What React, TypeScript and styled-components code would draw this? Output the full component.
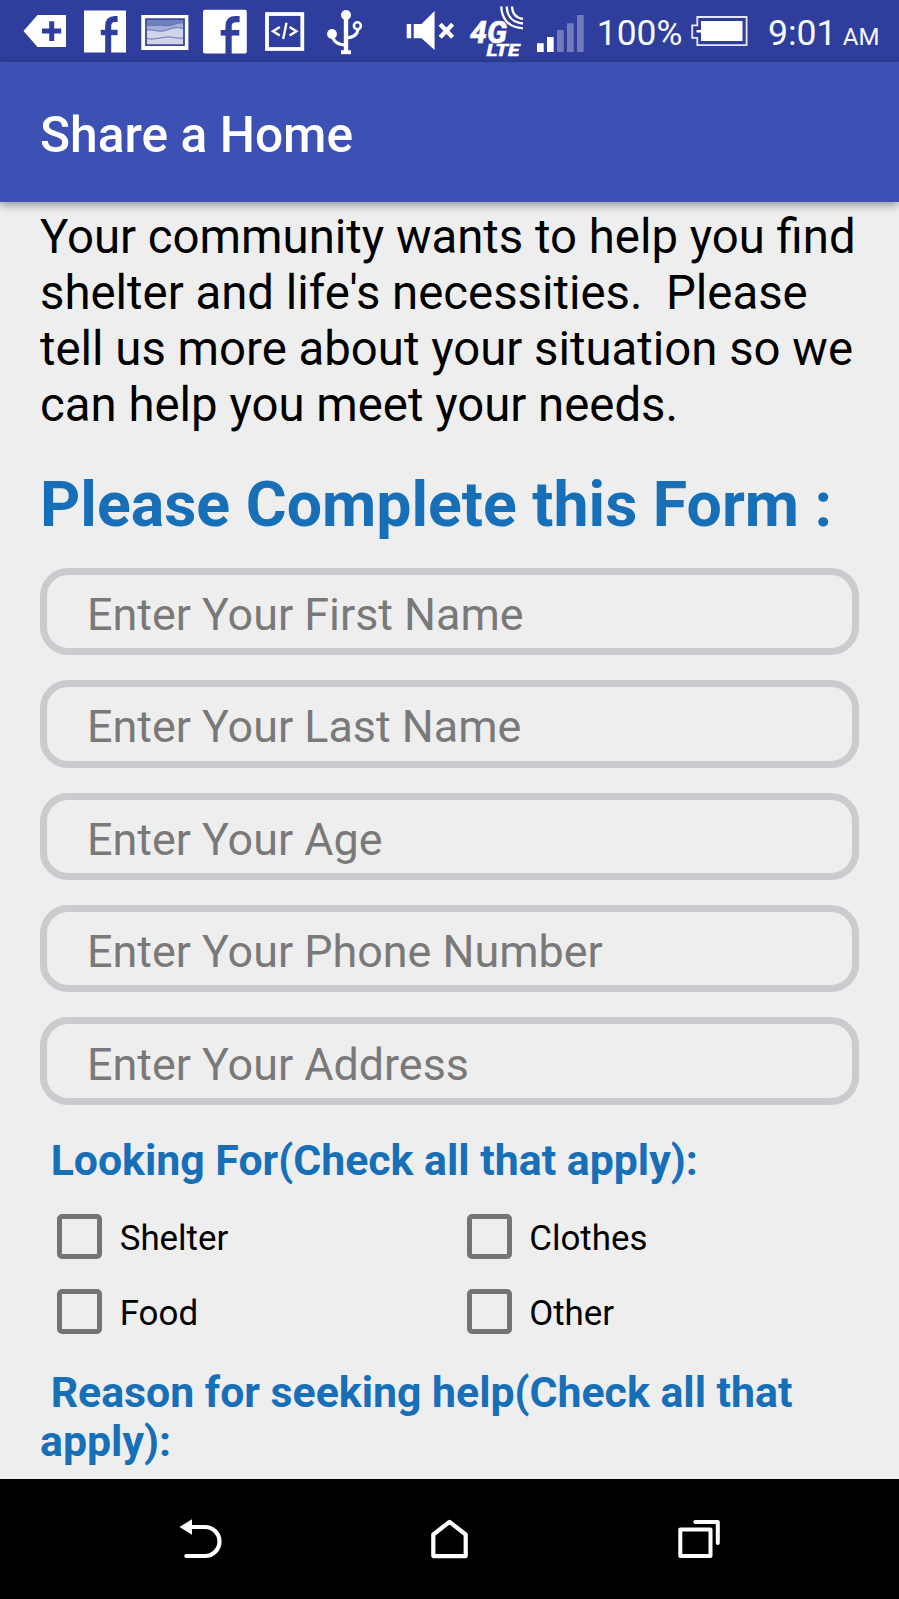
import React from "react";
import styled, { createGlobalStyle } from "styled-components";

const GlobalStyle = createGlobalStyle`
  * { box-sizing: border-box; }
  body {
    margin: 0;
    background: #eeeeee;
    font-family: Roboto, "Liberation Sans", sans-serif;
  }
`;

const Screen = styled.div`
  width: 899px;
  height: 1599px;
  display: flex;
  flex-direction: column;
  overflow: hidden;
  background: #eeeeee;
`;

const StatusBar = styled.header`
  flex: none;
  display: flex;
  height: 62px;
  background: #2f3e9c;
  color: #f7f9ff;
`;

const StatusIcon = styled.svg<{ $gap: number }>`
  flex: none;
  display: block;
  height: 62px;
  margin-left: ${(p) => p.$gap}px;
`;

const StatusText = styled.span<{ $gap: number; $size: number; $width: number }>`
  flex: none;
  width: ${(p) => p.$width}px;
  margin-left: ${(p) => p.$gap}px;
  font-size: ${(p) => p.$size}px;
  line-height: 66px;
  white-space: nowrap;
`;

const Meridiem = styled(StatusText)`
  line-height: 74px;
`;

const AppBar = styled.div`
  flex: none;
  display: flex;
  align-items: center;
  height: 140px;
  padding: 5px 40px 0;
  background: #3d51b4;
  box-shadow: 0 3px 9px rgba(0, 0, 0, 0.38);
`;

const Title = styled.h1`
  margin: 0;
  color: #ffffff;
  font-size: 49.7px;
  font-weight: 500;
  line-height: 58px;
`;

const Content = styled.main`
  flex: 1;
  min-height: 0;
  overflow: hidden;
  padding: 7px 40px 0;
`;

const Body = styled.div`
  flex: 1;
  min-height: 0;
  display: flex;
  flex-direction: column;
`;

const Intro = styled.p`
  margin: 0 -5px 0 0;
  color: #000000;
  font-size: 47.34px;
  line-height: 56px;
`;

const FormHeading = styled.h2`
  margin: 35px 0 0;
  color: #176fb8;
  font-size: 62.6px;
  font-weight: 700;
  line-height: 73px;
  white-space: nowrap;
`;

const FieldList = styled.div`
  display: flex;
  flex-direction: column;
  gap: 25px;
  margin-top: 26.9px;
`;

const Field = styled.label`
  display: flex;
  align-items: center;
  width: 819px;
  height: 87.4px;
  padding: 6px 20px 0 40px;
  border: 7px solid #c9cbcf;
  border-radius: 28px;
  color: #797979;
  font-size: 44.87px;
  line-height: 53px;
`;

const GroupHeading = styled.h3<{ $top: number }>`
  margin: ${(p) => p.$top}px 0 0;
  color: #176fb8;
  font-size: 42.8px;
  font-weight: 700;
  line-height: 49px;
  white-space: pre-wrap;
`;

const OptionGrid = styled.div`
  display: grid;
  grid-template-columns: 409.5px 409.5px;
  grid-auto-rows: 75px;
  margin-top: 14px;
`;

const Option = styled.label`
  display: flex;
  align-items: center;
  gap: 17.4px;
  padding-left: 17.3px;
  color: #000000;
  font-size: 34.9px;
  line-height: 41px;
`;

const CheckBox = styled.span`
  flex: none;
  width: 45px;
  height: 45px;
  border: 5px solid #747474;
  border-radius: 5px;
`;

const OptionLabel = styled.span`
  padding-top: 4px;
`;

const NavBar = styled.nav`
  flex: none;
  display: flex;
  justify-content: center;
  height: 120px;
  background: #000000;
`;

const NavButton = styled.button`
  display: flex;
  justify-content: center;
  width: 249.7px;
  padding: 0;
  border: 0;
  background: none;
`;

const fields = [
  "Enter Your First Name",
  "Enter Your Last Name",
  "Enter Your Age",
  "Enter Your Phone Number",
  "Enter Your Address",
];

const needs = ["Shelter", "Clothes", "Food", "Other"];

function StatusIcons() {
  return (
    <>
      <StatusIcon $gap={23} width="44" viewBox="23 0 44 62">
        <path d="M23.5 31 37.5 15H66V47H37.5Z" fill="#fff" />
        <path d="M51.7 21.3V41M42 31H61.2" stroke="#2f3e9c" strokeWidth="5" />
      </StatusIcon>
      <StatusIcon $gap={16} width="44" viewBox="83 0 44 62">
        <path d="M84 10.5H126V52.5H84Z" fill="#fff" />
        <path d="M108.2 53V26Q108.2 19 115 19H117.6" fill="none" stroke="#2f3e9c" strokeWidth="6" />
        <path d="M100.8 32.5H117.6" stroke="#2f3e9c" strokeWidth="5.4" />
      </StatusIcon>
      <StatusIcon $gap={13} width="50" viewBox="140 0 50 62">
        <path d="M141.3 15H188.4V50H141.3Z" fill="#fff" />
        <path d="M146 19.2H184V45.2H146Z" fill="#d0d5ea" stroke="#3a489f" strokeWidth="1.8" />
        <path d="M147 20H183V23C175 22 173 27 164 25.5C158 24.5 153 26 147 25Z" fill="#6f80bd" />
        <path d="M147 25C153 26 158 24.5 164 25.5C173 27 175 22 183 23V28C174 26 169 30 163 31C157 32 152 29 147 30Z" fill="#a3aed8" />
        <path d="M147 25.5C153 26.5 158 24.5 164 25.5C173 27 175 22 183 23M147 30C152 29 157 32 163 31C169 30 174 26 183 28.5M147 38.5C154 40.5 162 36.5 170 37C175 37.3 179 39 183 38" fill="none" stroke="#5968b0" strokeWidth="0.9" />
      </StatusIcon>
      <StatusIcon $gap={12} width="46" viewBox="202 0 46 62">
        <rect x="203" y="9.7" width="43.8" height="43.8" rx="2" fill="#fff" />
        <path d="M228.6 54V26Q228.6 19.2 236 19.2H239.6" fill="none" stroke="#2f3e9c" strokeWidth="6.2" />
        <path d="M220.7 32.8H239.3" stroke="#2f3e9c" strokeWidth="5.6" />
      </StatusIcon>
      <StatusIcon $gap={16} width="42" viewBox="264 0 42 62">
        <rect x="267" y="14" width="35.3" height="35" fill="none" stroke="#fff" strokeWidth="3.8" />
        <path d="M279.8 27 273 31.3 279.8 35.6M289.6 27 296.4 31.3 289.6 35.6M286.5 22.8 283.2 39" fill="none" stroke="#fff" strokeWidth="2.4" />
      </StatusIcon>
      <StatusIcon $gap={20} width="38" viewBox="326 0 38 62">
        <circle cx="346" cy="15" r="5" fill="#fff" />
        <circle cx="332" cy="34" r="4.9" fill="#fff" />
        <circle cx="357.4" cy="25.8" r="3.5" fill="none" stroke="#fff" strokeWidth="2.6" />
        <path d="M346 15V52" stroke="#fff" strokeWidth="4.4" />
        <path d="M341 52.2H351" stroke="#fff" strokeWidth="4" />
        <path d="M332.5 36C333.5 42 338 44.8 346 45.2M358 29.5C357.5 34.5 353.5 37.5 346 38" fill="none" stroke="#fff" strokeWidth="2.9" />
      </StatusIcon>
      <StatusIcon $gap={41} width="50" viewBox="405 0 50 62">
        <path d="M406.7 24H411.2V38.3H406.7ZM413.7 24H421.5L434.6 11V50L421.5 38.3H413.7Z" fill="#fff" />
        <path d="M440.2 24.2 452.6 37.3M452.6 24.2 440.2 37.3" stroke="#fff" strokeWidth="4.3" />
      </StatusIcon>
      <StatusIcon $gap={14} width="56" viewBox="469 0 56 62">
        <text x="470" y="43" textLength="37" lengthAdjust="spacingAndGlyphs" fill="#fff" stroke="#fff" strokeWidth="0.5" fontSize="32" fontWeight="800" fontStyle="italic">4G</text>
        <text x="486.5" y="55.8" textLength="33" lengthAdjust="spacingAndGlyphs" fill="#fff" stroke="#fff" strokeWidth="0.4" fontSize="15.6" fontWeight="800" fontStyle="italic">LTE</text>
        <path d="M501.3 6.5C501.5 18 508 27.5 523 28.3M506.7 6.5C507 15.5 512 22.8 523 23.5M512 6.5C512.3 13 515.5 18 523 18.8" fill="none" stroke="#fff" strokeWidth="2.3" />
      </StatusIcon>
      <StatusIcon $gap={11} width="50" viewBox="536 0 50 62">
        <path d="M537 43.3H543.7V52H537ZM547 37H553.7V52H547Z" fill="#fff" />
        <path d="M557 30H563.7V52H557ZM567 23.3H573.7V52H567ZM577 15H583.7V52H577Z" fill="#717bbd" />
      </StatusIcon>
    </>
  );
}

export default function App() {
  return (
    <>
      <GlobalStyle />
      <Screen>
        <StatusBar>
          <StatusIcons />
          <StatusText $gap={10.8} $size={35.4} $width={89.4}>100%</StatusText>
          <StatusIcon $gap={3.8} width="60" viewBox="690 0 60 62">
            <path d="M697.3 17H746.6V45.2H697.3V37.8H692.2V25.3H697.3Z" fill="none" stroke="#e3e8fa" strokeWidth="1.8" />
            <path d="M701 21H742.5V41H701V32.5H696.5V30H701Z" fill="#fff" />
          </StatusIcon>
          <StatusText $gap={18} $size={35.6} $width={70}>9:01</StatusText>
          <Meridiem $gap={4.8} $size={24} $width={40}>AM</Meridiem>
        </StatusBar>
        <AppBar>
          <Title>Share a Home</Title>
        </AppBar>
        <Body>
          <Content>
            <Intro>
              Your community wants to help you find shelter and life's necessities.&nbsp; Please tell us more about your situation so we can help you meet your needs.
            </Intro>
            <FormHeading>Please Complete this Form :</FormHeading>
            <FieldList>
              {fields.map((name) => (
                <Field key={name}>{name}</Field>
              ))}
            </FieldList>
            <GroupHeading $top={31.4}>{" Looking For(Check all that apply):"}</GroupHeading>
            <OptionGrid>
              {needs.map((need) => (
                <Option key={need}>
                  <CheckBox />
                  <OptionLabel>{need}</OptionLabel>
                </Option>
              ))}
            </OptionGrid>
            <GroupHeading $top={18.8}>{" Reason for seeking help(Check all that apply):"}</GroupHeading>
          </Content>
          <NavBar>
            <NavButton aria-label="Back">
              <svg width="50" height="120" viewBox="175 1479 50 120">
                <path d="M179.5 1527 192 1519.3V1534.7Z" fill="#fff" />
                <path d="M190 1527H205A14.5 14.5 0 0 1 205 1556H186.3" fill="none" stroke="#fff" strokeWidth="4.2" strokeLinecap="round" />
              </svg>
            </NavButton>
            <NavButton aria-label="Home">
              <svg width="50" height="120" viewBox="425 1479 50 120">
                <path d="M433.3 1534.5 449.5 1521.8 465.7 1534.5V1556.1H433.3Z" fill="none" stroke="#fff" strokeWidth="4.2" strokeLinejoin="round" />
              </svg>
            </NavButton>
            <NavButton aria-label="Recent apps">
              <svg width="50" height="120" viewBox="674.2 1479 50 120">
                <path d="M680.5 1529.4H710.7V1556.1H680.5ZM695.5 1522H718V1543" fill="none" stroke="#fff" strokeWidth="4" strokeLinecap="round" strokeLinejoin="round" />
              </svg>
            </NavButton>
          </NavBar>
        </Body>
      </Screen>
    </>
  );
}
